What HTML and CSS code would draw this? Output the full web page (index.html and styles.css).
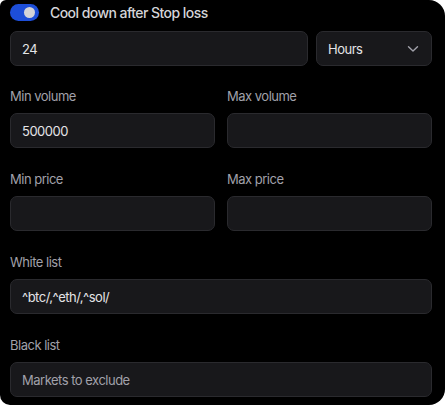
FILE: index.html
```html
<!DOCTYPE html>
<html>
<head>
<meta charset="utf-8">
<link rel="stylesheet" href="styles.css">
</head>
<body>
<div class="card">
  <div class="toggle-row">
    <span class="switch"><span class="knob"></span></span>
    <span class="toggle-label">Cool down after Stop loss</span>
  </div>
  <div class="row-top">
    <div class="field grow">24</div>
    <div class="field select">
      <span>Hours</span>
      <svg width="12" height="8" viewBox="0 0 12 8"><path d="M1.5 1.8 L6 6 L10.5 1.8" fill="none" stroke="#a1a1aa" stroke-width="1.4" stroke-linecap="round" stroke-linejoin="round"/></svg>
    </div>
  </div>
  <div class="grid2 first">
    <div class="group">
      <div class="label">Min volume</div>
      <div class="field">500000</div>
    </div>
    <div class="group">
      <div class="label">Max volume</div>
      <div class="field"></div>
    </div>
  </div>
  <div class="grid2">
    <div class="group">
      <div class="label">Min price</div>
      <div class="field"></div>
    </div>
    <div class="group">
      <div class="label">Max price</div>
      <div class="field"></div>
    </div>
  </div>
  <div class="group single">
    <div class="label">White list</div>
    <div class="field">^btc/,^eth/,^sol/</div>
  </div>
  <div class="group single">
    <div class="label">Black list</div>
    <div class="field placeholder">Markets to exclude</div>
  </div>
</div>
</body>
</html>
```
FILE: styles.css
```css
html, body {
  margin: 0;
  padding: 0;
  background: #ffffff;
}
body {
  font-family: Inter, "Noto Sans", sans-serif;
}
.card {
  width: 445px;
  height: 405px;
  box-sizing: border-box;
  background: #000000;
  border-radius: 6px 16px 16px 10px;
  padding: 4px 13px 0 10px;
  overflow: hidden;
}
.toggle-row {
  display: flex;
  align-items: center;
  height: 17px;
  gap: 11px;
}
.switch {
  position: relative;
  width: 29px;
  height: 17px;
  border-radius: 9px;
  background: #1d4ed8;
  flex: none;
}
.knob {
  position: absolute;
  right: 4px;
  top: 3px;
  width: 11px;
  height: 11px;
  border-radius: 50%;
  background: #d4d4d8;
}
.toggle-label {
  color: #d4d4d8;
  font-size: 14px;
  font-weight: 500;
  letter-spacing: -0.55px;
}
.row-top {
  display: flex;
  gap: 8px;
  margin-top: 10px;
}
.grow {
  flex: 1;
}
.field {
  height: 35px;
  box-sizing: border-box;
  background: #18181b;
  border: 1px solid #2a2a2e;
  border-radius: 7px;
  padding: 0 11px;
  display: flex;
  align-items: center;
  color: #e4e4e7;
  font-size: 13px;
  letter-spacing: -0.5px;
}
.select {
  width: 116px;
  justify-content: space-between;
  padding-right: 12px;
}
.placeholder {
  color: #a1a1aa;
}
.grid2 {
  display: grid;
  grid-template-columns: 1fr 1fr;
  column-gap: 12px;
  margin-top: 22px;
}
.grid2.first {
  margin-top: 21px;
}
.single {
  margin-top: 22px;
}
.label {
  color: #a1a1aa;
  font-size: 13px;
  line-height: 20px;
  margin-bottom: 6px;
  letter-spacing: -0.5px;
  position: relative;
  top: -1px;
}
```
